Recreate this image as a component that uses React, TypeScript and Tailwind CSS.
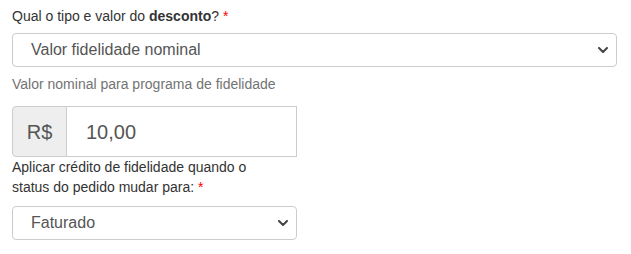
import React from "react";

function Chevron() {
  return (
    <svg width="10" height="6" viewBox="0 0 10 6" className="shrink-0">
      <path d="M1 1 L5 5 L9 1" fill="none" stroke="#444" strokeWidth="2" strokeLinecap="round" strokeLinejoin="round" />
    </svg>
  );
}

function Select({ value, className }: { value: string; className: string }) {
  return (
    <div
      className={
        "flex items-center justify-between h-[34px] border border-[#cccccc] rounded-[4px] bg-white pl-[18px] pr-[8px] text-[16px] text-[#555555] " +
        className
      }
    >
      <span>{value}</span>
      <Chevron />
    </div>
  );
}

export default function App() {
  return (
    <div
      className="bg-white w-[631px] h-[254px] pl-[12px] pt-[6px] text-[14px] leading-[20px] text-[#333333]"
      style={{ fontFamily: '"Liberation Sans", Arial, sans-serif' }}
    >
      <div className="w-[605px]">
        <label className="block mb-[7px]">
          Qual o tipo e valor do <b>desconto</b>? <span className="text-[#ff0000]">*</span>
        </label>
        <Select value="Valor fidelidade nominal" className="" />
        <div className="mt-[7px] text-[#737373]">Valor nominal para programa de fidelidade</div>
      </div>
      <div className="w-[285px] mt-[12px]">
        <div className="flex h-[51px] text-[20px] text-[#555555]">
          <div className="flex items-center justify-center w-[55px] bg-[#eeeeee] border border-[#cccccc] rounded-l-[4px]">
            R$
          </div>
          <div className="flex-1 flex items-center pl-[19px] border border-l-0 border-[#cccccc] bg-white">
            10,00
          </div>
        </div>
        <label className="block w-[270px] leading-[20px]">
          Aplicar crédito de fidelidade quando o status do pedido mudar para:{" "}
          <span className="text-[#ff0000]">*</span>
        </label>
        <Select value="Faturado" className="mt-[9px]" />
      </div>
    </div>
  );
}
